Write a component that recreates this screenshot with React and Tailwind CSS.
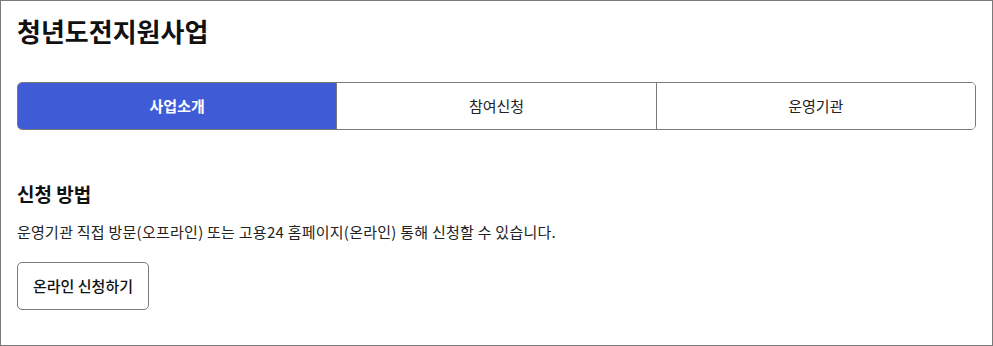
import React from "react";

const tabs = ["사업소개", "참여신청", "운영기관"];

export default function App() {
  return (
    <div
      className="w-[993px] h-[346px] border border-[#7a7a7a] bg-white px-4 pt-2 text-[#111]"
      style={{ fontFamily: '"Noto Sans CJK KR", "Noto Sans", sans-serif' }}
    >
      <h1 className="text-[26px] font-bold leading-[36px] mt-1">청년도전지원사업</h1>

      <div className="mt-[33px] flex h-[48px] rounded-[5px] border border-[#7a7a7a] overflow-hidden">
        {tabs.map((t, i) => (
          <button
            key={t}
            className={
              i === 0
                ? "flex-1 bg-[#3f5bd6] text-white text-[15px] font-bold"
                : "flex-1 border-l border-[#7a7a7a] bg-white text-[15px] text-[#222]"
            }
          >
            {t}
          </button>
        ))}
      </div>

      <section className="mt-[50px]">
        <h2 className="text-[19px] font-bold leading-[27px]">신청 방법</h2>
        <p className="mt-3.5 text-[15px] leading-[21px] tracking-[0.25px] text-[#222]">
          운영기관 직접 방문(오프라인) 또는 고용24 홈페이지(온라인) 통해 신청할 수 있습니다.
        </p>
        <button className="mt-5 h-[48px] w-[132px] rounded-[5px] border border-[#7a7a7a] bg-white text-[15px] font-medium text-[#111]">
          온라인 신청하기
        </button>
      </section>
    </div>
  );
}
